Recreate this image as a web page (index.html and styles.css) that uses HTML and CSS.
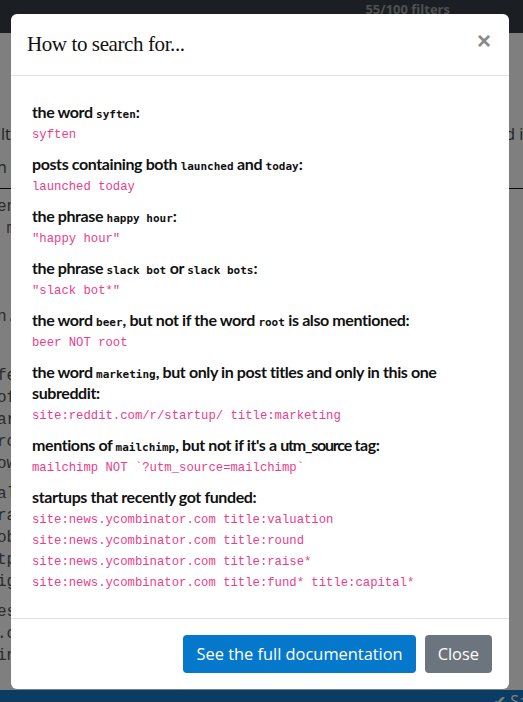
FILE: index.html
```html
<!DOCTYPE html>
<html lang="en">
  <head>
    <meta charset="UTF-8" />
    <meta name="viewport" content="width=device-width, initial-scale=1.0" />
    <title>filters</title>
    <link rel="stylesheet" href="styles.css">
  </head>
  <body>
    <div class="page">
      <nav class="topbar">
        <span class="quota">55/100 filters</span>
      </nav>
      <main class="content">
        <div class="filter-row">
          <span>ilter keywords</span>
          <span class="right-bit">d in</span>
        </div>
        <div class="filter-row second">
          <span>n</span>
        </div>
        <hr class="rule" />
        <div class="keywords">
          <div class="ln">en</div>
          <div class="ln">&nbsp;m</div>
          <div class="ln">&nbsp;&nbsp;l</div>
          <div class="ln">&nbsp;</div>
          <div class="ln">&nbsp;</div>
          <div class="ln">n.</div>
          <div class="ln">&nbsp;</div>
          <div class="ln gap-lg">fe</div>
          <div class="ln">of</div>
          <div class="ln">ar</div>
          <div class="ln">ro</div>
          <div class="ln">ow</div>
          <div class="ln gap">al</div>
          <div class="ln">ra</div>
          <div class="ln">ob</div>
          <div class="ln">tp</div>
          <div class="ln">ig</div>
          <div class="ln gap">es</div>
          <div class="ln">.c</div>
          <div class="ln">in</div>
        </div>
      </main>
      <footer class="savebar"><span class="save">&#10004; Save</span></footer>
    </div>

    <div class="backdrop">
      <div class="modal">
        <div class="modal-header">
          <h5 class="modal-title">How to search for...</h5>
          <span class="close">&times;</span>
        </div>
        <div class="modal-body">
          <div class="tip">
            <p class="label">the word <code>syften</code>:</p>
            <div class="query">syften</div>
          </div>
          <div class="tip">
            <p class="label">posts containing both <code>launched</code> and <code>today</code>:</p>
            <div class="query">launched today</div>
          </div>
          <div class="tip">
            <p class="label">the phrase <code>happy hour</code>:</p>
            <div class="query">"happy hour"</div>
          </div>
          <div class="tip">
            <p class="label">the phrase <code>slack bot</code> or <code>slack bots</code>:</p>
            <div class="query">"slack bot*"</div>
          </div>
          <div class="tip">
            <p class="label">the word <code>beer</code>, but not if the word <code>root</code> is also mentioned:</p>
            <div class="query">beer NOT root</div>
          </div>
          <div class="tip">
            <p class="label">the word <code>marketing</code>, but only in post titles and only in this one subreddit:</p>
            <div class="query">site:reddit.com/r/startup/ title:marketing</div>
          </div>
          <div class="tip">
            <p class="label">mentions of <code>mailchimp</code>, but not if it's a <span class="tight">utm_source</span> tag:</p>
            <div class="query">mailchimp NOT `?utm_source=mailchimp`</div>
          </div>
          <div class="tip">
            <p class="label">startups that recently got funded:</p>
            <div class="query">site:news.ycombinator.com title:valuation</div>
            <div class="query">site:news.ycombinator.com title:round</div>
            <div class="query">site:news.ycombinator.com title:raise*</div>
            <div class="query">site:news.ycombinator.com title:fund* title:capital*</div>
          </div>
        </div>
        <div class="modal-footer">
          <button class="btn btn-primary">See the full documentation</button>
          <button class="btn btn-secondary">Close</button>
        </div>
      </div>
    </div>
  </body>
</html>
```

FILE: styles.css
```css
* {
  box-sizing: border-box;
}
html,
body {
  margin: 0;
  overflow: hidden;
}
body {
  font-family: "Open Sans", "Liberation Sans", sans-serif;
  color: #212529;
  background: #fff;
}
.page {
  display: flex;
  flex-direction: column;
  height: calc(100vh + 28px);
}
.topbar {
  height: 33px;
  background: #373d44;
  display: flex;
  justify-content: flex-end;
  padding-right: 73px;
}
.quota {
  font-family: "Open Sans", sans-serif;
  font-weight: 700;
  font-size: 13px;
  line-height: 18px;
  color: #9aa0a6;
}
.content {
  flex: 1;
  padding-top: 89px;
  font-size: 16px;
  color: #444;
}
.filter-row {
  display: flex;
  justify-content: space-between;
  margin: 0 -6px 0 -3px;
  line-height: 24px;
}
.filter-row.second {
  margin-top: 9px;
}
.right-bit {
  margin-right: -4px;
}
.rule {
  margin: 9px 0 0;
  border: 0;
  border-top: 1px solid #111;
}
.keywords {
  padding-top: 7px;
  margin-left: -3px;
  font-family: "Liberation Mono", monospace;
  font-size: 16px;
  color: #555;
}
.ln {
  line-height: 22px;
  white-space: pre;
}
.ln.gap {
  margin-top: 8px;
}
.ln.gap-lg {
  margin-top: 15px;
}
.savebar {
  height: 40px;
  background: #1779c6;
  padding-left: 493px;
  white-space: nowrap;
  overflow: hidden;
}
.save {
  color: #fff;
  font-size: 16px;
  line-height: 22px;
}

.backdrop {
  position: fixed;
  inset: 0;
  background: rgba(0, 0, 0, 0.5);
}
.modal {
  position: absolute;
  top: 14px;
  left: 11px;
  width: 498px;
  background: #fff;
  border-radius: 6px;
}
.modal-header {
  display: flex;
  align-items: center;
  justify-content: space-between;
  padding: 16px;
  border-bottom: 1px solid #dee2e6;
}
.modal-title {
  margin: 0;
  font-family: "Liberation Serif", serif;
  font-weight: 400;
  font-size: 21px;
  line-height: 29px;
  letter-spacing: -0.4px;
  color: #111;
}
.close {
  font-family: "Liberation Sans", sans-serif;
  font-weight: 700;
  font-size: 24px;
  line-height: 1;
  color: #8a8a8a;
  margin: -7px 2px 0 0;
}
.modal-body {
  padding: 25px 21px 24px;
}
.tip {
  margin-bottom: 7px;
}
.tip:last-child {
  margin-bottom: 0;
}
.label {
  margin: 0 0 3px;
  font-family: "Lato", sans-serif;
  font-weight: 700;
  font-size: 16px;
  line-height: 21px;
  letter-spacing: -0.4px;
  color: #111;
}
.label code {
  font-family: "DejaVu Sans Mono", monospace;
  font-weight: 700;
  font-size: 11px;
  line-height: 1;
  letter-spacing: 0;
}
.tight {
  letter-spacing: -1.2px;
}
.query {
  font-family: "Liberation Mono", monospace;
  font-size: 12.25px;
  line-height: 21px;
  color: #e83e8c;
  white-space: pre;
}
.modal-footer {
  display: flex;
  justify-content: flex-end;
  gap: 9px;
  padding: 16px 17px;
  border-top: 1px solid #dee2e6;
}
.btn {
  font-family: "Open Sans", sans-serif;
  font-size: 16.4px;
  line-height: 24px;
  height: 38px;
  padding: 6px 13px;
  border: 0;
  border-radius: 4px;
  color: #fff;
}
.btn-primary {
  background: #0678cc;
}
.btn-secondary {
  background: #6c757d;
}
```
